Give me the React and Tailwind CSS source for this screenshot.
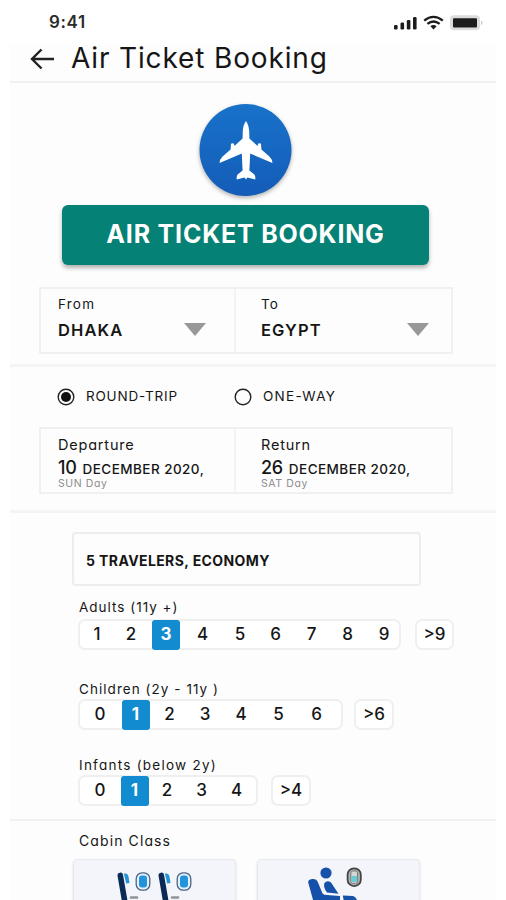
const PASSENGERS = [
  {
    label: "Adults (11y +)",
    labelClass: "tracking-[1px]",
    more: ">9",
    selected: "3",
    wrap: "h-[82px]",
    box: "w-[323px]",
    moreBox: "ml-[14px] w-[39px]",
    cells: [
      ["1", "ml-[3px]"],
      ["2", "ml-[6px]"],
      ["3", "ml-[7px]"],
      ["4", "ml-[8.5px]"],
      ["5", "ml-[9.5px]"],
      ["6", "ml-[7.5px]"],
      ["7", "ml-[8px]"],
      ["8", "ml-[8px]"],
      ["9", "ml-[8.5px]"],
    ],
  },
  {
    label: "Children (2y - 11y )",
    labelClass: "tracking-[1.05px]",
    more: ">6",
    selected: "1",
    wrap: "h-[76px] [&>div]:mt-px",
    box: "w-[265px]",
    moreBox: "ml-[11px] w-[40px]",
    cells: [
      ["0", "ml-[6px]"],
      ["1", "ml-[7.5px]"],
      ["2", "ml-[6px]"],
      ["3", "ml-[7.5px]"],
      ["4", "ml-[8px]"],
      ["5", "ml-[9.5px]"],
      ["6", "ml-[10px]"],
    ],
  },
  {
    label: "Infants (below 2y)",
    labelClass: "tracking-[1.25px]",
    more: ">4",
    selected: "1",
    wrap: "h-[63px] [&>div]:mt-px",
    box: "w-[180px]",
    moreBox: "ml-[13px] w-[40px]",
    cells: [
      ["0", "ml-[6px]"],
      ["1", "ml-[6.5px]"],
      ["2", "ml-[4.5px]"],
      ["3", "ml-[6.5px]"],
      ["4", "ml-[7px]"],
    ],
  },
];

function StatusBar() {
  return (
    <div className="flex h-[45px] items-center justify-between pr-[22px] pl-[49px]">
      <span className="text-[17px] leading-none font-semibold tracking-[0.6px] text-[#2b2b2b]">
        9:41
      </span>
      <svg width="91" height="18" viewBox="0 0 91 18" className="text-[#1c1c1c]">
        <g fill="currentColor">
          <rect x="1" y="11" width="3.6" height="4.5" rx="1.2" />
          <rect x="7.5" y="8.5" width="3.6" height="7" rx="1.2" />
          <rect x="13.8" y="6" width="3.6" height="9.5" rx="1.2" />
          <rect x="20" y="3" width="3.6" height="12.5" rx="1.2" />
          <path d="M40.5 15.5 L37.4 12.3 Q40.5 9.8 43.6 12.3 Z" />
        </g>
        <path
          d="M31.2 6.6 Q40.5 -0.8 49.8 6.6 M34.4 9.9 Q40.5 5 46.6 9.9"
          fill="none"
          stroke="currentColor"
          strokeWidth="2.3"
        />
        <rect x="57" y="1.3" width="30" height="15" rx="4" fill="#dcdcdc" />
        <path d="M88 6.2 q3.4 2.6 0 5.2z" fill="#cfcfcf" />
        <rect x="60" y="4.2" width="24" height="9.2" rx="1" fill="#1c1c1c" />
      </svg>
    </div>
  );
}

function PlaneBadge() {
  return (
    <svg width="100" height="101" viewBox="0 0 100 101" className="overflow-visible">
      <defs>
        <linearGradient id="badge" x1="0" y1="0" x2="0" y2="1">
          <stop offset="0" stopColor="#1872c9" />
          <stop offset="1" stopColor="#145cb8" />
        </linearGradient>
      </defs>
      <circle cx="49.5" cy="50" r="46" fill="url(#badge)" className="drop-shadow-[0_2px_2px_rgba(0,0,0,0.3)]" />
      <path
        fill="#fff"
        d="M50 21.2 C51.4 22.5 52.9 26.5 53.2 31 L53.4 38.6 L61.6 46 L62 43.8 Q63.4 42.6 65 43.8 L65.4 49.4 L73.4 56.4 Q76.6 59.6 76.4 63 L54.2 53.6 L53.4 70.6 L58.4 74.4 Q59.6 76 59.3 79.4 L51.4 77.6 L50 79.6 L48.6 77.6 L40.7 79.4 Q40.4 76 41.6 74.4 L46.6 70.6 L45.8 53.6 L23.6 63 Q23.4 59.6 26.6 56.4 L34.6 49.4 L35 43.8 Q36.6 42.6 38 43.8 L38.4 46 L46.6 38.6 L46.8 31 C47.1 26.5 48.6 22.5 50 21.2 Z"
      />
    </svg>
  );
}

function Place({ label, value, className }) {
  return (
    <div className={`relative pt-[7px] ${className}`}>
      <p className="text-[13.5px] leading-[16px] tracking-[1.2px]">{label}</p>
      <p className="mt-[8px] text-[16.5px] leading-[20px] font-semibold tracking-[1.1px]">
        {value}
      </p>
      <svg width="22" height="13" className="absolute top-[34px] right-[22px]">
        <path d="M0 0H22L11 13Z" fill="#989898" />
      </svg>
    </div>
  );
}

function DateField({ label, day, rest, weekday, className }) {
  return (
    <div className={`pt-[8px] whitespace-nowrap ${className}`}>
      <p className="text-[14.5px] leading-[16px] tracking-[0.8px]">{label}</p>
      <p className="mt-[5px] flex items-baseline leading-[20px]">
        <span className="text-[18px] font-medium tracking-[-0.3px]">{day}</span>
        <span className="ml-[6px] text-[13.5px] font-medium tracking-[0.45px]">
          {rest}
        </span>
      </p>
      <p className="-mt-px text-[10.5px] leading-[12px] tracking-[0.6px] text-[#8c8c8c]">
        {weekday}
      </p>
    </div>
  );
}

function Radio({ checked }) {
  return (
    <svg width="18" height="18" viewBox="0 0 18 18">
      <circle cx="9" cy="9" r="7.8" fill="none" stroke="#222" strokeWidth="1.4" />
      {checked && <circle cx="9" cy="9" r="5" fill="#111" />}
    </svg>
  );
}

function PassengerRow({ row }) {
  return (
    <div className={row.wrap}>
      <p className={`ml-px text-[13.5px] leading-[18px] ${row.labelClass}`}>
        {row.label}
      </p>
      <div className="mt-[3px] flex text-[17px] leading-none font-medium">
        <div
          className={`flex h-[31px] items-center rounded-[7px] border-2 border-[#efefef] bg-white ${row.box}`}
        >
          {row.cells.map(([n, gap]) => (
            <span
              key={n}
              className={`flex w-[28px] shrink-0 items-center justify-center ${gap} ${
                n === row.selected
                  ? "h-[30px] rounded-[3px] bg-[#128bd0] font-bold text-white"
                  : "h-[28px]"
              }`}
            >
              {n}
            </span>
          ))}
        </div>
        <div
          className={`flex h-[31px] items-center justify-center rounded-[7px] border-2 border-[#efefef] bg-white ${row.moreBox}`}
        >
          {row.more}
        </div>
      </div>
    </div>
  );
}

function SeatWindow() {
  return (
    <svg width="41" height="40" viewBox="0 0 41 40">
      <path d="M4.3 3.4 L10.6 40" stroke="#0b2a55" strokeWidth="5.6" strokeLinecap="round" />
      <path d="M7.8 1.6 Q12 0.6 12.6 5 L13.5 11 L10.2 11.5 Z" fill="#2496d8" />
      <path d="M15 25.5h6" stroke="#8d949c" strokeWidth="2.6" strokeLinecap="round" />
      <rect x="20.2" y="0.8" width="13.6" height="17.4" rx="6" fill="#e4f1fb" stroke="#4a6584" strokeWidth="1.3" />
      <rect x="23" y="3.4" width="8" height="12.2" rx="3" fill="#2293dc" />
    </svg>
  );
}

export default function App() {
  return (
    <div className="h-[900px] w-[506px] overflow-hidden bg-white font-['Inter','Open_Sans',sans-serif] text-[#161616] [font-feature-settings:'cv11']">
      <StatusBar />

      <main className="mx-[10px] h-[855px] bg-[#fdfdfd]">
        {/* Header */}
        <header className="flex h-[38px] items-start border-b-2 border-[#f1f1f1] pl-[20px]">
          <svg width="25" height="22" viewBox="0 0 25 22" className="mt-[3px]" fill="none" stroke="#222" strokeWidth="2.4">
            <path d="M24 11H2.5M11.5 1.5L2 11L11.5 20.5" />
          </svg>
          <h1 className="ml-[16px] -mt-[4px] text-[28px] leading-[34px] tracking-[0.85px] whitespace-nowrap">
            Air Ticket Booking
          </h1>
        </header>

        <div className="ml-[185.5px] h-[122px] pt-[17px]">
          <PlaneBadge />
        </div>

        <button className="ml-[52px] flex h-[60px] w-[367px] items-center justify-center rounded-[6px] bg-[#058275] text-[25px] font-bold tracking-[0.8px] whitespace-nowrap text-white shadow-[0_3px_4px_rgba(0,0,0,0.3)]">
          AIR TICKET BOOKING
        </button>

        {/* Route */}
        <div className="mt-[22px] ml-[29px] flex h-[67px] w-[414px] border-2 border-[#f0f0f0]">
          <Place label="From" value="DHAKA" className="w-[195px] border-r-2 border-[#f3f3f3] pl-[17px] [&>svg]:right-[28px]" />
          <Place label="To" value="EGYPT" className="flex-1 pl-[25px]" />
        </div>

        <div className="mt-[10px] h-[3px] bg-[#f4f4f4]" />

        {/* Trip type */}
        <div className="flex h-[60px] items-center pb-px pl-[47px] text-[13.5px] tracking-[0.8px]">
          <Radio checked />
          <span className="ml-[11px] w-[148px]">ROUND-TRIP</span>
          <Radio />
          <span className="ml-[11px] tracking-[1.3px]">ONE-WAY</span>
        </div>

        {/* Dates */}
        <div className="ml-[29px] flex h-[67px] w-[414px] border-2 border-[#f0f0f0]">
          <DateField label="Departure" day="10" rest="DECEMBER 2020," weekday="SUN Day" className="w-[195px] border-r-2 border-[#f3f3f3] pl-[17px]" />
          <DateField label="Return" day="26" rest="DECEMBER 2020," weekday="SAT Day" className="flex-1 pl-[25px]" />
        </div>

        <div className="mt-[16px] h-[3px] bg-[#f4f4f4]" />

        {/* Travelers */}
        <div className="mt-[19px] ml-[62px] flex h-[54px] w-[349px] items-center rounded-[4px] border-2 border-[#ededed] pt-[2px] pl-[12px] text-[14px] font-bold tracking-[0.4px]">
          5 TRAVELERS, ECONOMY
        </div>

        <div className="mt-[12px] ml-[68px]">
          {PASSENGERS.map((row) => (
            <PassengerRow key={row.label} row={row} />
          ))}
        </div>

        <div className="h-[2px] bg-[#f1f1f1]" />

        {/* Cabin class */}
        <h2 className="mt-[10px] ml-[69px] text-[14px] leading-[20px] tracking-[1.1px]">
          Cabin Class
        </h2>
        <div className="mt-[8px] ml-[63px] flex gap-[21px]">
          <div className="flex h-[60px] w-[163px] rounded-[4px] border border-[#e8eaee] bg-[#f3f5fa] pt-[12px] pl-[42px] shadow-sm">
            <SeatWindow />
            <SeatWindow />
          </div>
          <div className="h-[60px] w-[163px] rounded-[4px] border border-[#e8eaee] bg-[#f3f5fa] pt-[7px] pl-[49px] shadow-sm">
            <svg width="60" height="40" viewBox="0 0 60 40">
              <g fill="#1551a8">
                <circle cx="19" cy="6" r="5.6" />
                <path d="M1.2 15.5 Q1 12.5 5 12 Q9.5 11.5 10.8 15 L15.5 26.5 Q17 28 20 28 L33 29 V40 H8 Z" />
                <path d="M17.5 16 Q20 13 24 15.5 L31.5 26.8 L20 25.6 Q15.8 20 17.5 16Z" />
                <path d="M35.8 28.5 L46 29 Q50.5 30 51.5 40 H38Z" />
              </g>
              <rect x="40.6" y="1.3" width="13.2" height="17.8" rx="6.4" fill="#b4b4b4" stroke="#444" strokeWidth="1.8" />
              <rect x="43.8" y="4" width="6.8" height="12.4" rx="2" fill="#d6d6d6" stroke="#777" />
              <rect x="44.3" y="9" width="5.8" height="6" fill="#68cbd3" />
            </svg>
          </div>
        </div>
      </main>
    </div>
  );
}
